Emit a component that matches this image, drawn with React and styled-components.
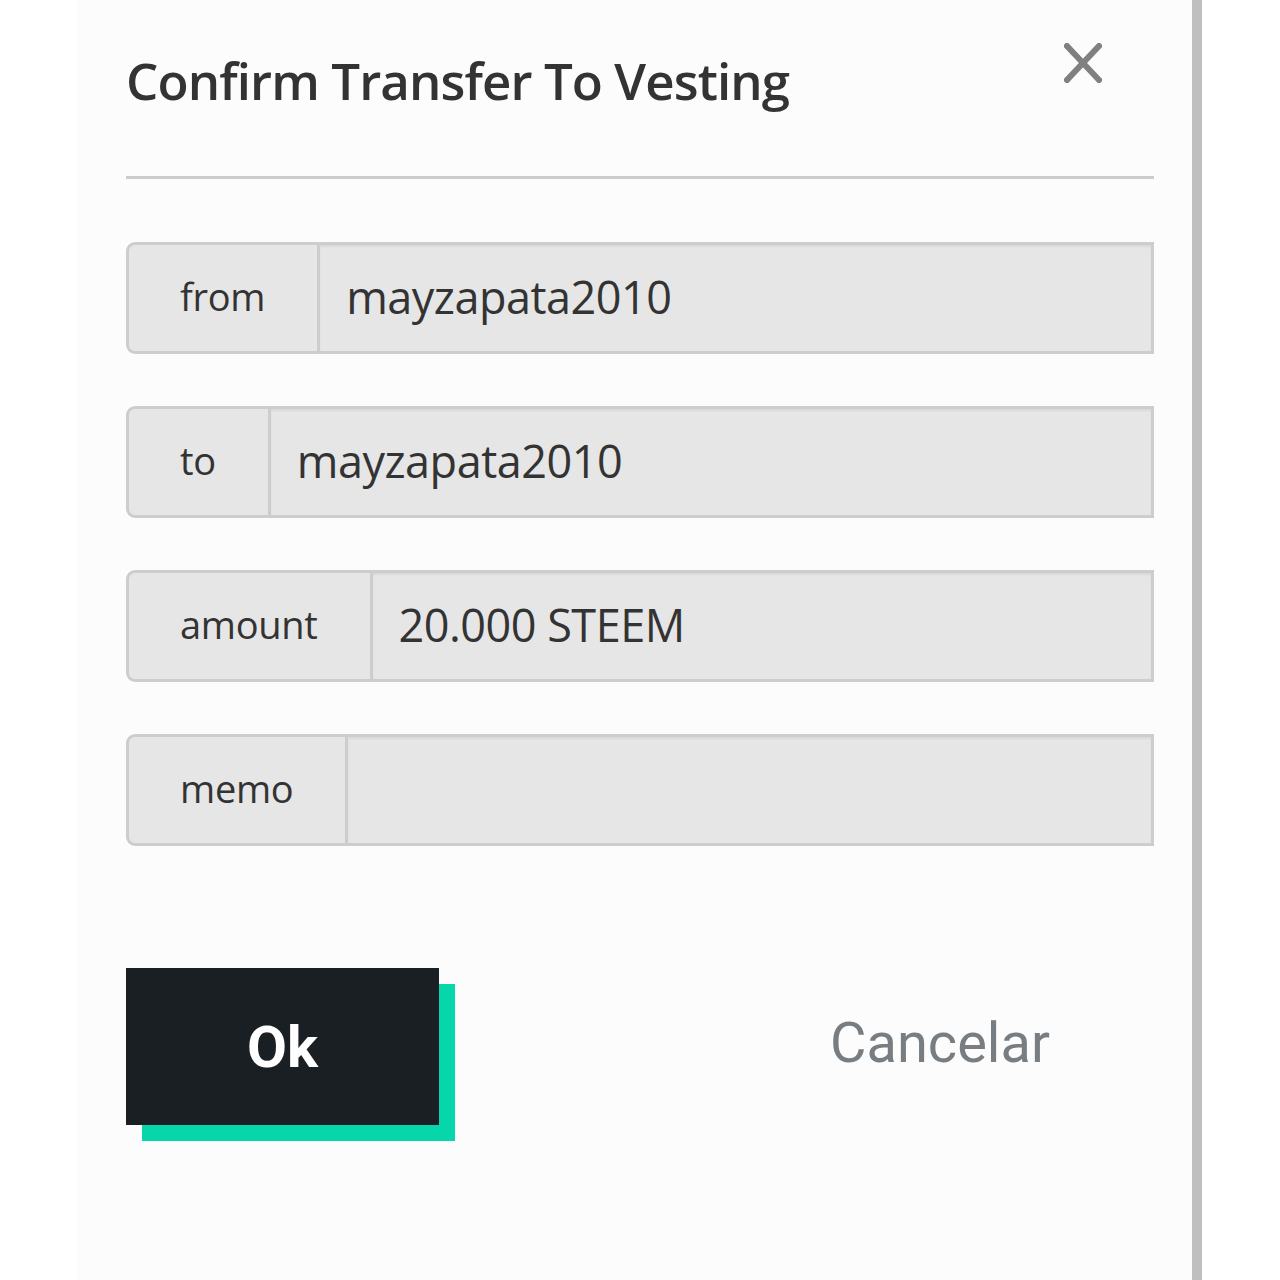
import React from "react";
import styled, { createGlobalStyle } from "styled-components";

const GlobalStyle = createGlobalStyle`
  html, body { margin: 0; padding: 0; background: #ffffff; }
  * { box-sizing: border-box; }
`;

const Page = styled.div`
  display: flex;
  width: 1280px;
  min-height: 1280px;
  background: #ffffff;
`;

const Panel = styled.div`
  margin-left: 78px;
  width: 1124px;
  min-height: 1280px;
  background: #fcfcfc;
  border-right: 10px solid #bfbfbf;
  padding: 40px 38px 0 48px;
  font-family: "Open Sans", "Noto Sans", sans-serif;
  color: #333333;
`;

const Header = styled.div`
  display: flex;
  justify-content: space-between;
  align-items: flex-start;
  height: 139px;
  border-bottom: 3px solid #cccccc;
`;

const Title = styled.h1`
  margin: 0;
  padding-top: 8px;
  font-size: 51px;
  font-weight: 600;
  letter-spacing: -0.9px;
  line-height: 64px;
  color: #333333;
`;

const Close = styled.button`
  margin: 3px 52px 0 0;
  padding: 0;
  width: 38px;
  height: 40px;
  border: none;
  background: transparent;
  display: flex;
  align-items: center;
  justify-content: center;
`;

const Form = styled.div`
  display: flex;
  flex-direction: column;
  gap: 52px;
  padding-top: 63px;
`;

const Group = styled.div`
  display: flex;
  height: 112px;
  border: 3px solid #cdcdcd;
  border-radius: 9px 0 0 9px;
  background: #e6e6e6;
  overflow: hidden;
`;

const Label = styled.div`
  display: flex;
  align-items: center;
  padding: 0 52px 4px 51px;
  border-right: 3px solid #cdcdcd;
  font-size: 38px;
  color: #333333;
  letter-spacing: -0.3px;
`;

const Value = styled.div`
  flex: 1;
  display: flex;
  align-items: center;
  padding: 0 0 4px 26px;
  font-size: 45px;
  letter-spacing: -0.5px;
  color: #333333;
  box-shadow: inset 0 2px 2px rgba(0, 0, 0, 0.06);
`;

const Actions = styled.div`
  display: flex;
  align-items: center;
  padding-top: 122px;
`;

const OkButton = styled.button`
  width: 313px;
  height: 157px;
  border: none;
  background: #1a1f24;
  box-shadow: 16px 16px 0 #07d6aa;
  color: #ffffff;
  font-family: Roboto, "Liberation Sans", sans-serif;
  font-weight: 700;
  font-size: 58px;
  padding: 0;
`;

const CancelButton = styled.button`
  margin-left: 391px;
  border: none;
  background: transparent;
  padding: 0;
  color: #787d82;
  font-family: Roboto, "Liberation Sans", sans-serif;
  font-weight: 400;
  font-size: 56px;
  margin-top: -8px;
`;

const rows = [
  { label: "from", value: "mayzapata2010" },
  { label: "to", value: "mayzapata2010" },
  { label: "amount", value: "20.000 STEEM" },
  { label: "memo", value: "" },
];

export default function App() {
  return (
    <>
      <GlobalStyle />
      <Page>
        <Panel>
          <Header>
            <Title>Confirm Transfer To Vesting</Title>
            <Close aria-label="close">
              <svg width="38" height="40" viewBox="0 0 38 40">
                <path d="M3 3 L35 37 M35 3 L3 37" stroke="#808080" strokeWidth="6" strokeLinecap="square" />
              </svg>
            </Close>
          </Header>
          <Form>
            {rows.map((r) => (
              <Group key={r.label}>
                <Label>{r.label}</Label>
                <Value>{r.value}</Value>
              </Group>
            ))}
          </Form>
          <Actions>
            <OkButton>Ok</OkButton>
            <CancelButton>Cancelar</CancelButton>
          </Actions>
        </Panel>
      </Page>
    </>
  );
}
